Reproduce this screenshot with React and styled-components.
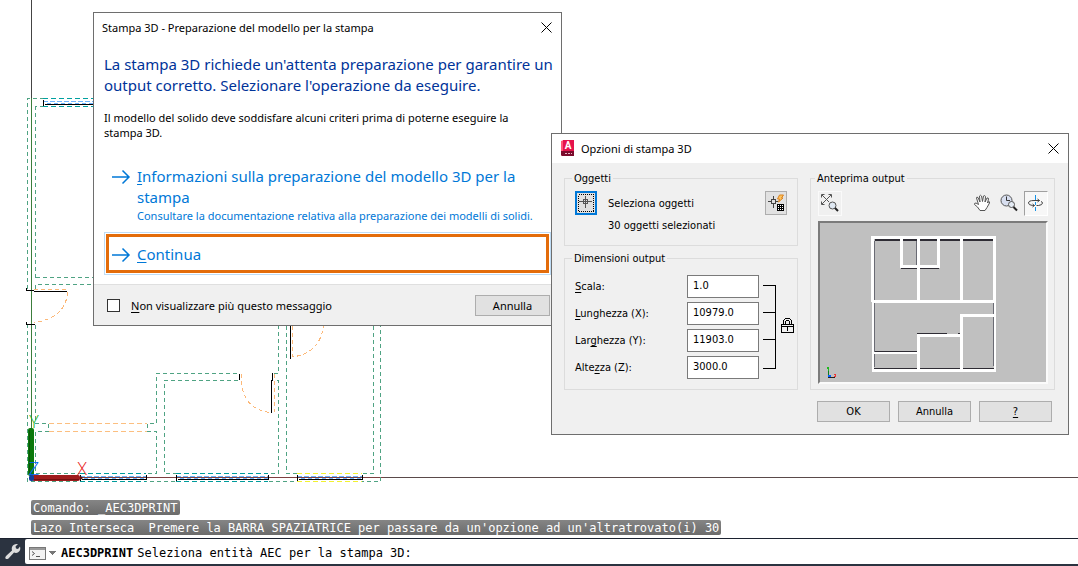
import React from "react";
import styled, { createGlobalStyle, css } from "styled-components";

const uiFont = '"Noto Sans", "Open Sans", sans-serif';
const headingFont = '"Noto Sans", "Open Sans", sans-serif';
const smallFont = '"DejaVu Sans Condensed", "DejaVu Sans", sans-serif';
const monoFont = '"DejaVu Sans Mono", "Liberation Mono", monospace';

const GlobalStyle = createGlobalStyle`
  * { box-sizing: border-box; }
  html, body, #root { margin: 0; height: 100%; }
  body { background: #fff; color: #000; font-family: ${uiFont}; font-size: 11px; }
  button, input { font: inherit; color: inherit; }
  u { text-underline-offset: 2px; text-decoration-thickness: 1px; }
`;

const Page = styled.main`
  display: flex;
  flex-direction: column;
  min-height: 100%;
`;

const Workspace = styled.section`
  position: relative;
  flex: 1;
  display: flex;
  flex-direction: column;
  justify-content: flex-end;
  overflow: hidden;
`;

const Plan = styled.svg`
  position: absolute;
  inset: 0;
  width: 100%;
  height: 100%;
  fill: none;
  shape-rendering: crispEdges;
`;

const History = styled.div`
  position: relative;
  display: flex;
  flex-direction: column;
  align-items: flex-start;
  gap: 5px;
  padding: 0 0 3px 31px;
  font: 12px/17px ${monoFont};
`;

const HistoryLine = styled.div`
  height: 15px;
  padding: 0 2px;
  border-radius: 2px;
  background: linear-gradient(#858585, #6b6b6b);
  color: #fff;
  white-space: pre;
`;

const CommandBar = styled.form`
  position: relative;
  display: flex;
  height: 28px;
  background: #2b3340;
  border-top: 1px solid #1c2230;
  border-bottom: 2px solid #2b3340;
`;

const ToolButton = styled.button`
  width: 25px;
  padding: 0;
  border: 0;
  background: none;
  display: grid;
  place-items: center;
`;

const CommandField = styled.div`
  flex: 1;
  display: flex;
  align-items: center;
  gap: 4px;
  padding: 3px 0 0 4px;
  background: #fff;
  border-radius: 2px 0 0 2px;
  font: 12px/15px ${monoFont};
`;

const RecentButton = styled.button`
  display: flex;
  align-items: center;
  padding: 0;
  border: 0;
  background: none;
`;

const CommandName = styled.label`
  font-weight: bold;
`;

const CommandInput = styled.input`
  flex: 1;
  min-width: 0;
  padding: 0;
  border: 0;
  outline: 0;
  background: none;
`;

const Dialog = styled.section`
  position: absolute;
  left: ${(p) => p.$x}px;
  top: ${(p) => p.$y}px;
  width: ${(p) => p.$w}px;
  border: 1px solid #6e6e6e;
  background: ${(p) => p.$bg};
`;

const TitleBar = styled.header`
  display: flex;
  align-items: center;
  gap: 6px;
  height: 29px;
  padding: 0 8px;
  background: #fff;
`;

const Title = styled.h1`
  flex: 1;
  margin: 0;
  font-size: 11px;
  font-weight: 400;
  white-space: nowrap;
`;

const CloseButton = styled.button`
  display: grid;
  place-items: center;
  width: 14px;
  height: 14px;
  padding: 0;
  border: 0;
  background: none;
`;

const TaskBody = styled.div`
  padding: 12px 10px 11px;
`;

const Heading = styled.h2`
  margin: 0;
  color: #003399;
  font: 400 15px/21px ${headingFont};
  white-space: nowrap;
`;

const Paragraph = styled.p`
  margin: 14px 0 0;
  line-height: 15px;
  white-space: nowrap;
`;

const Choice = styled.button`
  display: flex;
  align-items: flex-start;
  gap: 6px;
  width: 100%;
  padding: 7px;
  border: 0;
  background: none;
  color: #0078d7;
  text-align: left;
  font: 15px/21px ${headingFont};
  white-space: nowrap;
  margin-top: ${(p) => (p.$active ? 4 : 19)}px;
  ${(p) =>
    p.$active &&
    css`
      width: calc(100% - 4px);
      padding: 7px 2px 5px;
      border: 3px solid #e36c0a;
      outline: 1px solid #bfdcf5;
      outline-offset: 1px;
      margin-left: 2px;
    `}
`;

const ChoiceIcon = styled.svg`
  flex: none;
  width: 20px;
  height: 21px;
  fill: none;
  stroke: #0078d7;
  stroke-width: 1.5;
`;

const Note = styled.small`
  display: block;
  font: 11px/15px ${uiFont};
`;

const TaskFooter = styled.footer`
  display: flex;
  align-items: center;
  justify-content: space-between;
  height: 41px;
  padding: 0 11px 0 13px;
  border-top: 1px solid #dfdfdf;
  background: #f0f0f0;
`;

const Check = styled.label`
  display: flex;
  align-items: center;
  gap: 11px;
  white-space: nowrap;
`;

const Tick = styled.input`
  appearance: none;
  width: 13px;
  height: 13px;
  margin: 0;
  border: 1px solid #333;
  background: #fff;
`;

const PushButton = styled.button`
  width: ${(p) => p.$w || 73}px;
  height: 21px;
  padding: 0;
  border: 1px solid #adadad;
  background: #e1e1e1;
  line-height: 17px;
`;

const OptionsBody = styled.div`
  display: grid;
  grid-template-columns: minmax(0, 234fr) minmax(0, 245fr);
  column-gap: 12px;
  padding: 8px 13px 12px 12px;
  font: 11px/15px ${smallFont};
`;

const Column = styled.div`
  display: flex;
  flex-direction: column;
  gap: 5px;
`;

const Group = styled.fieldset`
  min-width: 0;
  margin: 0;
  padding: 0 ${(p) => p.$end ?? p.$pad}px 0 ${(p) => p.$pad}px;
  border: 1px solid #dcdcdc;
`;

const Legend = styled.legend`
  margin-left: -3px;
  padding: 0 2px;
  line-height: 15px;
`;

const PickArea = styled.div`
  display: flex;
  align-items: flex-start;
  gap: 11px;
  height: 59px;
  padding-top: 5px;
`;

const PickText = styled.div`
  flex: 1;
  padding-top: 2px;
  line-height: 22px;
  white-space: nowrap;
`;

const PickButton = styled.button`
  display: grid;
  place-items: center;
  width: 22px;
  height: 24px;
  padding: 0;
  border: ${(p) => (p.$focused ? "2px solid #0078d7" : "1px solid #adadad")};
  background: #e1e1e1;
`;

const Sizes = styled.div`
  display: flex;
  gap: 4px;
  padding: 9px 0 10px;
`;

const SizeFields = styled.div`
  flex: none;
  display: grid;
  grid-template-columns: 112px 72px;
  row-gap: 4px;
  align-items: center;
`;

const SizeInput = styled.input`
  width: 72px;
  height: 23px;
  padding: 0 5px 2px;
  border: 1px solid #7a7a7a;
  background: #fff;
`;

const LinkSvg = styled.svg`
  flex: none;
  width: 32px;
  height: 104px;
  fill: none;
  stroke: #000;
  shape-rendering: crispEdges;
`;

const PreviewTools = styled.div`
  display: flex;
  align-items: center;
  gap: 3px;
  height: 26px;
  margin: 4px 0 5px;
`;

const ViewButton = styled.button`
  display: grid;
  place-items: center;
  width: 24px;
  height: 25px;
  padding: 0;
  border: 1px solid ${(p) => (p.$framed ? "#fafafa" : "transparent")};
  background: none;
  margin-right: ${(p) => (p.$framed ? "auto" : "0")};
  ${(p) =>
    p.$pressed &&
    css`
      border-color: #a0a0a0 #fff #fff #a0a0a0;
      background: #f7f7f7;
    `}
`;

const Preview = styled.svg`
  display: block;
  width: 100%;
  height: 163px;
  margin-bottom: 5px;
  border: 2px solid;
  border-color: #7b7b7b #fbfbfb #fbfbfb #7b7b7b;
  background: #c0c0c0;
  fill: none;
`;

const Actions = styled.div`
  grid-column: 2;
  display: flex;
  gap: 8px;
  padding: 11px 0 0 7px;
`;

function CloseIcon() {
  return (
    <svg width="11" height="11" viewBox="0 0 11 11" stroke="#000" fill="none">
      <path d="M.5 .5l10 10M10.5 .5l-10 10" />
    </svg>
  );
}

function ArrowIcon() {
  return (
    <ChoiceIcon viewBox="0 0 20 21">
      <path d="M1 11H18M11.500 4.500L18 11L11.500 17.500" />
    </ChoiceIcon>
  );
}

const wallPath = [
  "M27.500 289V98.500H93M35.500 277.500V106.500H93M35.500 277.500H93M35.500 289V284.500H93",
  "M27.500 324V481.500H380.500V326M35.500 325V423.500H48.500V431.500H35.500V473.500H156.500V431.500H147.500V423.500H156.500V373.500H238",
  "M238 380.500H164.500V473.500H278.500V380.500H274M274 373.500H278.500V326M286.500 326V473.500H373.500V326",
].join("");

function WindowMark({ x1, x2, y, color }) {
  const edges = `M${x1} ${y - 4}H${x2}M${x1} ${y + 4}H${x2}`;
  return (
    <g>
      <path d={edges} stroke="#fff" />
      <path d={edges} stroke={color} strokeDasharray="5 3" />
      <path d={`M${x1} ${y - 1}H${x2}`} stroke="#6cb4ff" strokeDasharray="5 2" />
      <path d={`M${x1 + 4} ${y + 1}H${x2}`} stroke="#6cb4ff" strokeDasharray="4 3" />
      <path d={`M${x1 + 2} ${y + 2}H${x2}M${x1} ${y - 3}v6M${x2} ${y - 3}v5`} stroke="#000" />
    </g>
  );
}

function FloorPlan() {
  return (
    <Plan aria-hidden="true">
      <path d="M31.500 0V98" stroke="#444" />
      <path d="M31.500 98V440" stroke="#3c7d3c" />
      <line x1="34" x2="384" y1="477.500" y2="477.500" stroke="#7d3f3f" />
      <line x1="384" x2="100%" y1="477.500" y2="477.500" stroke="#5a4a4a" />
      <path d={wallPath} stroke="#4fa383" strokeDasharray="4 3" />
      <path d="M49 423.500H147M49 431.500H147" stroke="#fcbf80" strokeDasharray="5 3" />
      <WindowMark x1={43} x2={100} y={102.5} color="#00a0a0" />
      <WindowMark x1={80} x2={146} y={477.5} color="#009c9c" />
      <WindowMark x1={176} x2={268} y={477.5} color="#009c9c" />
      <WindowMark x1={297} x2={362} y={477.5} color="#f2f230" />
      <g stroke="#fcb878" strokeDasharray="4 3">
        <path d="M34 289.500H67M67.500 292Q66 318 34 322.500" />
        <path d="M241.500 374V382Q244 410 271 412.500M274.500 374V412" />
        <path d="M292.500 326V357Q320 353 323.500 326" />
      </g>
      <g stroke="#000">
        <path d="M26.500 288V290.500H34M34 291.500H67M26.500 322V324.500H35" />
        <path d="M239.500 374V380M272.500 373V381M271.500 380V413M290.500 326V359" />
      </g>
      <g shapeRendering="auto">
        <rect x="28" y="428" width="6" height="48" rx="2" fill="#0c7a0c" />
        <path d="M29.500 430V474" stroke="#075807" />
        <rect x="32" y="475" width="48" height="6" rx="2" fill="#9e1c1c" />
        <path d="M34 479.500H79" stroke="#741010" />
        <path d="M80 475.500l3 2.500l-3 2.500" fill="#5c1010" />
        <rect x="29" y="475" width="5" height="6" rx="2" fill="#123f9c" />
      </g>
      <g fontFamily="Open Sans" fontWeight="300" fontSize="18" shapeRendering="auto" textAnchor="middle">
        <text x="34" y="428" fill="#18b018">Y</text>
        <text x="82" y="475" fill="#e82020">X</text>
        <text x="34" y="475" fill="#0060ff">Z</text>
      </g>
    </Plan>
  );
}

function AppLogo() {
  return (
    <svg width="15" height="17" viewBox="0 0 15 17">
      <path d="M1 1L4 0V16H2L1 15Z" fill="#ff5577" />
      <path d="M3 0H14V11H3Z" fill="#e5134c" />
      <path d="M1 11H14V16H2L1 15Z" fill="#7a0b2c" />
      <text x="8" y="9" fontFamily="Roboto" fontSize="10" fontWeight="700" fill="#fff" textAnchor="middle">A</text>
      <path d="M5 13.500h2M8 13.500h2M11 13.500h1" stroke="#e9b7c5" />
    </svg>
  );
}

function PickIcon() {
  return (
    <svg width="18" height="20" viewBox="0 0 18 20" fill="none" stroke="#555" shapeRendering="crispEdges">
      <rect x="1.500" y="1.500" width="15" height="17" stroke="#000" strokeDasharray="1 1" />
      <path d="M8.500 3V15M2 8.500H15" />
      <rect x="6.500" y="6.500" width="4" height="4" />
    </svg>
  );
}

function QuickSelectIcon() {
  return (
    <svg width="18" height="20" viewBox="0 0 18 20" fill="none" stroke="#444" shapeRendering="crispEdges">
      <path d="M6.500 3V7M6.500 11V15M1 8.500H4M9 8.500H11" />
      <rect x="4.500" y="6.500" width="4" height="4" />
      <path d="M12.500 2H16.500L14.500 5H16L11.500 9L12.500 6H10.500Z" fill="#ffc45c" stroke="#d98222" shapeRendering="auto" />
      <rect x="10" y="11" width="7" height="7" fill="#000" stroke="none" />
      <path d="M11 12.500H16M11 14.500H16M11 16.500H16" stroke="#fff" strokeDasharray="1 1" />
    </svg>
  );
}

function ZoomExtentsIcon() {
  return (
    <svg width="20" height="20" viewBox="0 0 20 20" fill="none" stroke="#555">
      <path d="M2 2L9 9M11 2L2 11M1.500 4.500V1.500H4.500M8.500 1.500H11.500V4.500M1.500 8.500V11.500H4.500" />
      <circle cx="12.500" cy="12.500" r="3.500" fill="#dfe8f2" />
      <path d="M15 15L18 18" stroke="#222" strokeWidth="2" />
    </svg>
  );
}

function PanIcon() {
  return (
    <svg width="18" height="18" viewBox="0 0 18 18" fill="#fff" stroke="#555">
      <path d="M7 16.500L4.500 13L1.500 10.500Q1 9 3 9L5.500 10.500L3.500 4Q3.500 2.500 5 3.500L7 8L6.500 2Q7.500 .5 8.500 2L9.500 7.500L10.500 2Q12 1 12.500 2.500L12 8L14 4Q15.500 3.500 15.500 5L14.500 9L15 8Q17 7 16.500 9L14 13.500L12 16.500Z" />
    </svg>
  );
}

function ZoomTimeIcon() {
  return (
    <svg width="18" height="18" viewBox="0 0 18 18" fill="none" stroke="#555">
      <circle cx="6.500" cy="6.500" r="5.500" fill="#d8dff0" />
      <path d="M6.500 2.500V6.500H10" stroke="#333" />
      <circle cx="11.500" cy="10.500" r="3" fill="#e4ebf4" />
      <path d="M13.500 13L17 16.500" stroke="#222" strokeWidth="2" />
    </svg>
  );
}

function OrbitIcon() {
  return (
    <svg width="18" height="18" viewBox="0 0 18 18" fill="none" stroke="#444">
      <path d="M8.500 1V6M8.500 8V11M8.500 13V17" stroke="#1492e6" />
      <path d="M7.500 11.500H5.500Q1.500 11 1.500 9Q1.500 6.500 7 6.500H12.500M9.500 11.500H11.500Q15.500 11 15.500 9Q15.500 8 14 7.500M5.500 10L7.500 11.500L5.500 13M10.500 5L12.500 6.500L10.500 8" />
    </svg>
  );
}

function PreviewDrawing() {
  return (
    <Preview role="img" aria-label="Anteprima" viewBox="0 0 225 159" preserveAspectRatio="xMidYMid meet" shapeRendering="crispEdges">
      <g stroke="#2e2c34">
        <path d="M54 17H173" strokeWidth="2" />
        <path d="M80 45.500H118M96 110.500H126M137 110.500H140M53 128.500H96M96 145.500H173" />
        <path d="M53 146H96" strokeWidth="2" />
      </g>
      <path d="M53.500 18V144M139.500 17V77M172.500 17V143M95.500 18V43" stroke="#6a6b74" />
      <g stroke="#fff" strokeWidth="3">
        <path d="M51.500 79V14.500H173.500V78" />
        <path d="M52 77V147.500" strokeWidth="2" />
        <path d="M174 77V147.500" strokeWidth="2" />
        <path d="M51 78.500H174M51 147.500H175M80.500 15V43.500H117.500V15M97.500 15V78M140.500 15V78" />
        <path d="M97.500 148V112.500H140.500M140.500 148V92.500H174" />
        <path d="M52 130H96" strokeWidth="2" />
      </g>
      <path d="M7.500 148V154.500H14" stroke="#202020" />
      <path d="M7.500 147V152" stroke="#107a20" />
      <path d="M7 152H10V154H7Z" fill="#0060ff" />
      <path d="M6.500 144l1 2l1-2M7.500 146v2" stroke="#20b820" />
      <path d="M13 151.500h2v2h-2" stroke="#e33" />
    </Preview>
  );
}

function TaskDialog() {
  return (
    <Dialog role="dialog" aria-labelledby="task-title" $x={93} $y={12} $w={469} $bg="#fff">
      <TitleBar>
        <Title id="task-title">Stampa 3D - Preparazione del modello per la stampa</Title>
        <CloseButton aria-label="Chiudi"><CloseIcon /></CloseButton>
      </TitleBar>
      <TaskBody>
        <Heading>
          La stampa 3D richiede un'attenta preparazione per garantire un<br />
          output corretto. Selezionare l'operazione da eseguire.
        </Heading>
        <Paragraph>
          Il modello del solido deve soddisfare alcuni criteri prima di poterne eseguire la<br />
          stampa 3D.
        </Paragraph>
        <Choice>
          <ArrowIcon />
          <span>
            <u>I</u>nformazioni sulla preparazione del modello 3D per la<br />
            stampa
            <Note>Consultare la documentazione relativa alla preparazione dei modelli di solidi.</Note>
          </span>
        </Choice>
        <Choice $active>
          <ArrowIcon />
          <span><u>C</u>ontinua</span>
        </Choice>
      </TaskBody>
      <TaskFooter>
        <Check>
          <Tick type="checkbox" />
          <span><u>N</u>on visualizzare più questo messaggio</span>
        </Check>
        <PushButton $w={75}>Annulla</PushButton>
      </TaskFooter>
    </Dialog>
  );
}

const sizes = [
  { id: "scala", label: <><u>S</u>cala:</>, value: "1.0" },
  { id: "lunghezza", label: <><u>L</u>unghezza (X):</>, value: "10979.0" },
  { id: "larghezza", label: <>Lar<u>g</u>hezza (Y):</>, value: "11903.0" },
  { id: "altezza", label: <>Alte<u>z</u>za (Z):</>, value: "3000.0" },
];

function OptionsDialog() {
  return (
    <Dialog role="dialog" aria-labelledby="options-title" $x={551} $y={133} $w={518} $bg="#f0f0f0">
      <TitleBar>
        <AppLogo />
        <Title id="options-title">Opzioni di stampa 3D</Title>
        <CloseButton aria-label="Chiudi"><CloseIcon /></CloseButton>
      </TitleBar>
      <OptionsBody>
        <Column>
          <Group $pad={10}>
            <Legend>Oggetti</Legend>
            <PickArea>
              <PickButton $focused aria-label="Seleziona oggetti"><PickIcon /></PickButton>
              <PickText>
                Seleziona oggetti<br />
                30 oggetti selezionati
              </PickText>
              <PickButton aria-label="Selezione rapida"><QuickSelectIcon /></PickButton>
            </PickArea>
          </Group>
          <Group $pad={10} $end={2}>
            <Legend>Dimensioni output</Legend>
            <Sizes>
              <SizeFields>
                {sizes.map(({ id, label, value }) => (
                  <React.Fragment key={id}>
                    <label htmlFor={id}>{label}</label>
                    <SizeInput id={id} defaultValue={value} />
                  </React.Fragment>
                ))}
              </SizeFields>
              <LinkSvg viewBox="0 0 32 104" aria-hidden="true">
                <path d="M0 10.500H12.500V93.500H0M0 37.500H12M0 64.500H12" />
                <path d="M20.500 49V45.500L22.500 43.500H26.500L28.500 45.500V49M22.500 49V46.500L23.500 45.500H25.500L26.500 46.500V49" />
                <rect x="18.500" y="49.500" width="12" height="8" />
                <path d="M18 51.500H31M24.500 52V56" />
              </LinkSvg>
            </Sizes>
          </Group>
        </Column>
        <Group $pad={7} $end={6}>
          <Legend>Anteprima output</Legend>
          <PreviewTools>
            <ViewButton $framed aria-label="Zoom estensioni"><ZoomExtentsIcon /></ViewButton>
            <ViewButton aria-label="Pan"><PanIcon /></ViewButton>
            <ViewButton aria-label="Zoom"><ZoomTimeIcon /></ViewButton>
            <ViewButton $pressed aria-label="Orbita"><OrbitIcon /></ViewButton>
          </PreviewTools>
          <PreviewDrawing />
        </Group>
        <Actions>
          <PushButton>OK</PushButton>
          <PushButton>Annulla</PushButton>
          <PushButton aria-label="Guida"><u>?</u></PushButton>
        </Actions>
      </OptionsBody>
    </Dialog>
  );
}

export default function App() {
  return (
    <Page>
      <GlobalStyle />
      <Workspace>
        <FloorPlan />
        <TaskDialog />
        <OptionsDialog />
        <History>
          <HistoryLine>Comando: _AEC3DPRINT</HistoryLine>
          <HistoryLine>Lazo Interseca  Premere la BARRA SPAZIATRICE per passare da un'opzione ad un'altratrovato(i) 30</HistoryLine>
        </History>
      </Workspace>
      <CommandBar onSubmit={(e) => e.preventDefault()}>
        <ToolButton type="button" aria-label="Personalizza">
          <svg width="17" height="17" viewBox="0 0 17 17" fill="#dcdcdc">
            <path d="M2 13L8 7.500Q7 4 9.500 2Q11.500 .5 14 1L11.500 3.500L12 5.500L14 6L16 3.500Q17 7 14.500 9Q12.500 10.500 10 9.500L4.500 15.500Q2.500 16.500 1.500 15.500Q.8 14.500 2 13Z" />
          </svg>
        </ToolButton>
        <CommandField>
          <RecentButton type="button" aria-label="Comandi recenti">
            <svg width="28" height="13" viewBox="0 0 28 13" fill="none" shapeRendering="crispEdges">
              <rect x=".5" y=".5" width="16" height="12" fill="#f3f3f3" stroke="#777" />
              <path d="M1 2H16" stroke="#999" strokeWidth="2" />
              <path d="M3 4.500l2.500 2l-2.500 2M7 9.500h4" stroke="#555" shapeRendering="auto" />
              <path d="M19 4H27L23 8Z" fill="#777" />
            </svg>
          </RecentButton>
          <CommandName htmlFor="command">AEC3DPRINT</CommandName>
          <CommandInput id="command" defaultValue="Seleziona entità AEC per la stampa 3D:" />
        </CommandField>
      </CommandBar>
    </Page>
  );
}
